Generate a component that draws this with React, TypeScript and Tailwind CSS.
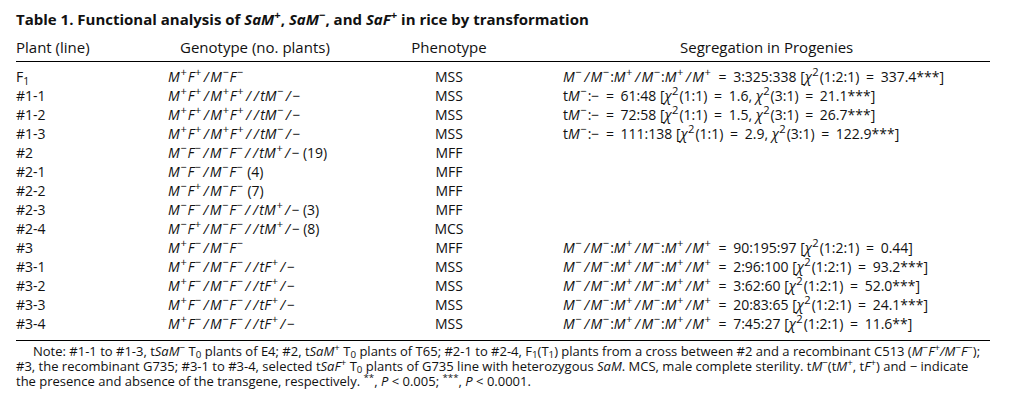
import React from "react";

type Row = { plant: React.ReactNode; geno: string; count?: string; pheno: string; seg?: string };

const rows: Row[] = [
  { plant: <>F<sub>1</sub></>, geno: "M+F+/M−F−", pheno: "MSS", seg: "M−/M−:M+/M−:M+/M+ = 3:325:338 [χ2(1:2:1) = 337.4***]" },
  { plant: "#1-1", geno: "M+F+/M+F+//tM−/−", pheno: "MSS", seg: "tM−:− = 61:48 [χ2(1:1) = 1.6, χ2(3:1) = 21.1***]" },
  { plant: "#1-2", geno: "M+F+/M+F+//tM−/−", pheno: "MSS", seg: "tM−:− = 72:58 [χ2(1:1) = 1.5, χ2(3:1) = 26.7***]" },
  { plant: "#1-3", geno: "M+F+/M+F+//tM−/−", pheno: "MSS", seg: "tM−:− = 111:138 [χ2(1:1) = 2.9, χ2(3:1) = 122.9***]" },
  { plant: "#2", geno: "M−F−/M−F−//tM+/−", count: "(19)", pheno: "MFF" },
  { plant: "#2-1", geno: "M−F−/M−F−", count: "(4)", pheno: "MFF" },
  { plant: "#2-2", geno: "M−F+/M−F−", count: "(7)", pheno: "MFF" },
  { plant: "#2-3", geno: "M−F−/M−F−//tM+/−", count: "(3)", pheno: "MFF" },
  { plant: "#2-4", geno: "M−F+/M−F−//tM+/−", count: "(8)", pheno: "MCS" },
  { plant: "#3", geno: "M+F−/M−F−", pheno: "MFF", seg: "M−/M−:M+/M−:M+/M+ = 90:195:97 [χ2(1:2:1) = 0.44]" },
  { plant: "#3-1", geno: "M+F−/M−F−//tF+/−", pheno: "MSS", seg: "M−/M−:M+/M−:M+/M+ = 2:96:100 [χ2(1:2:1) = 93.2***]" },
  { plant: "#3-2", geno: "M+F−/M−F−//tF+/−", pheno: "MSS", seg: "M−/M−:M+/M−:M+/M+ = 3:62:60 [χ2(1:2:1) = 52.0***]" },
  { plant: "#3-3", geno: "M+F−/M−F−//tF+/−", pheno: "MSS", seg: "M−/M−:M+/M−:M+/M+ = 20:83:65 [χ2(1:2:1) = 24.1***]" },
  { plant: "#3-4", geno: "M+F−/M−F−//tF+/−", pheno: "MSS", seg: "M−/M−:M+/M−:M+/M+ = 7:45:27 [χ2(1:2:1) = 11.6**]" },
];

function Sup({ children }: { children: React.ReactNode }) {
  return <sup className="ml-[0.5px] mr-[1px] text-[0.8em]">{children}</sup>;
}

// M+, F−, χ2 -> italic letter with a raised mark; slashes and "=" spaced out
function fmt(s: string) {
  const out: React.ReactNode[] = [];
  const re = /([MF])([+−])|χ2|\/| = /g;
  let last = 0;
  let m: RegExpExecArray | null;
  let k = 0;
  while ((m = re.exec(s))) {
    if (m.index > last) out.push(s.slice(last, m.index));
    if (m[0] === "/") out.push(<i key={k++} className="px-[1.5px]">/</i>);
    else if (m[0] === " = ") out.push(<span key={k++} className="px-[3px]"> = </span>);
    else if (m[0] === "χ2")
      out.push(
        <span key={k++}>
          <i>χ</i>
          <Sup>2</Sup>
        </span>
      );
    else
      out.push(
        <span key={k++}>
          <i>{m[1]}</i>
          <Sup>{m[2]}</Sup>
        </span>
      );
    last = m.index + m[0].length;
  }
  if (last < s.length) out.push(s.slice(last));
  return out;
}

function Gene({ g, s }: { g: string; s: string }) {
  return (
    <>
      <i>{g}</i>
      <sup>{s}</sup>
    </>
  );
}

export default function App() {
  return (
    <div
      className="h-[414px] w-[1016px] overflow-hidden bg-white pl-4 text-[#111]"
      style={{ fontFamily: '"Open Sans", "Noto Sans", sans-serif' }}
    >
      <h1 className="pt-[9px] text-[15px] font-bold leading-[20px]">
        Table 1. Functional analysis of <Gene g="SaM" s="+" />, <Gene g="SaM" s="−" />, and <Gene g="SaF" s="+" /> in rice by
        transformation
      </h1>

      <div className="w-[974px]">
        <div className="mt-[8px] grid grid-cols-[152px_227px_108px_1fr] border-b-[1.5px] border-black pb-[4px] text-[15px] leading-[20px]">
          <div>Plant (line)</div>
          <div className="pl-[12px]">Genotype (no. plants)</div>
          <div className="whitespace-nowrap text-center">Phenotype</div>
          <div className="pl-[177px]">Segregation in Progenies</div>
        </div>

        <div className="border-b-[1.5px] border-black pt-[5px] pb-[7px] text-[14px] leading-[19px]">
          {rows.map((r, i) => (
            <div key={i} className="grid h-[19px] grid-cols-[152px_227px_108px_1fr] whitespace-nowrap">
              <div>{r.plant}</div>
              <div>
                <i>{fmt(r.geno)}</i>
                {r.count ? <> {r.count}</> : null}
              </div>
              <div className="text-center">{r.pheno}</div>
              <div className="pl-[60px]">{r.seg ? fmt(r.seg) : null}</div>
            </div>
          ))}
        </div>

        <div className="pt-[3px] text-[13px] leading-[15px] whitespace-nowrap">
          <div className="pl-[17px]">
            Note: #1-1 to #1-3, t<Gene g="SaM" s="−" /> T<sub>0</sub> plants of E4; #2, t<Gene g="SaM" s="+" /> T<sub>0</sub> plants
            of T65; #2-1 to #2-4, F<sub>1</sub>(T<sub>1</sub>) plants from a cross between #2 and a recombinant C513 (
            <Gene g="M" s="−" />
            <Gene g="F" s="+" />
            <i>/</i>
            <Gene g="M" s="−" />
            <Gene g="F" s="−" />
            );
          </div>
          <div>
            #3, the recombinant G735; #3-1 to #3-4, selected t<Gene g="SaF" s="+" /> T<sub>0</sub> plants of G735 line with
            heterozygous <i>SaM</i>. MCS, male complete sterility. t<Gene g="M" s="−" />(t<Gene g="M" s="+" />, t
            <Gene g="F" s="+" />) and − indicate
          </div>
          <div>
            the presence and absence of the transgene, respectively. <sup>**</sup>, <i>P</i> &lt; 0.005; <sup>***</sup>, <i>P</i>{" "}
            &lt; 0.0001.
          </div>
        </div>
      </div>
    </div>
  );
}
